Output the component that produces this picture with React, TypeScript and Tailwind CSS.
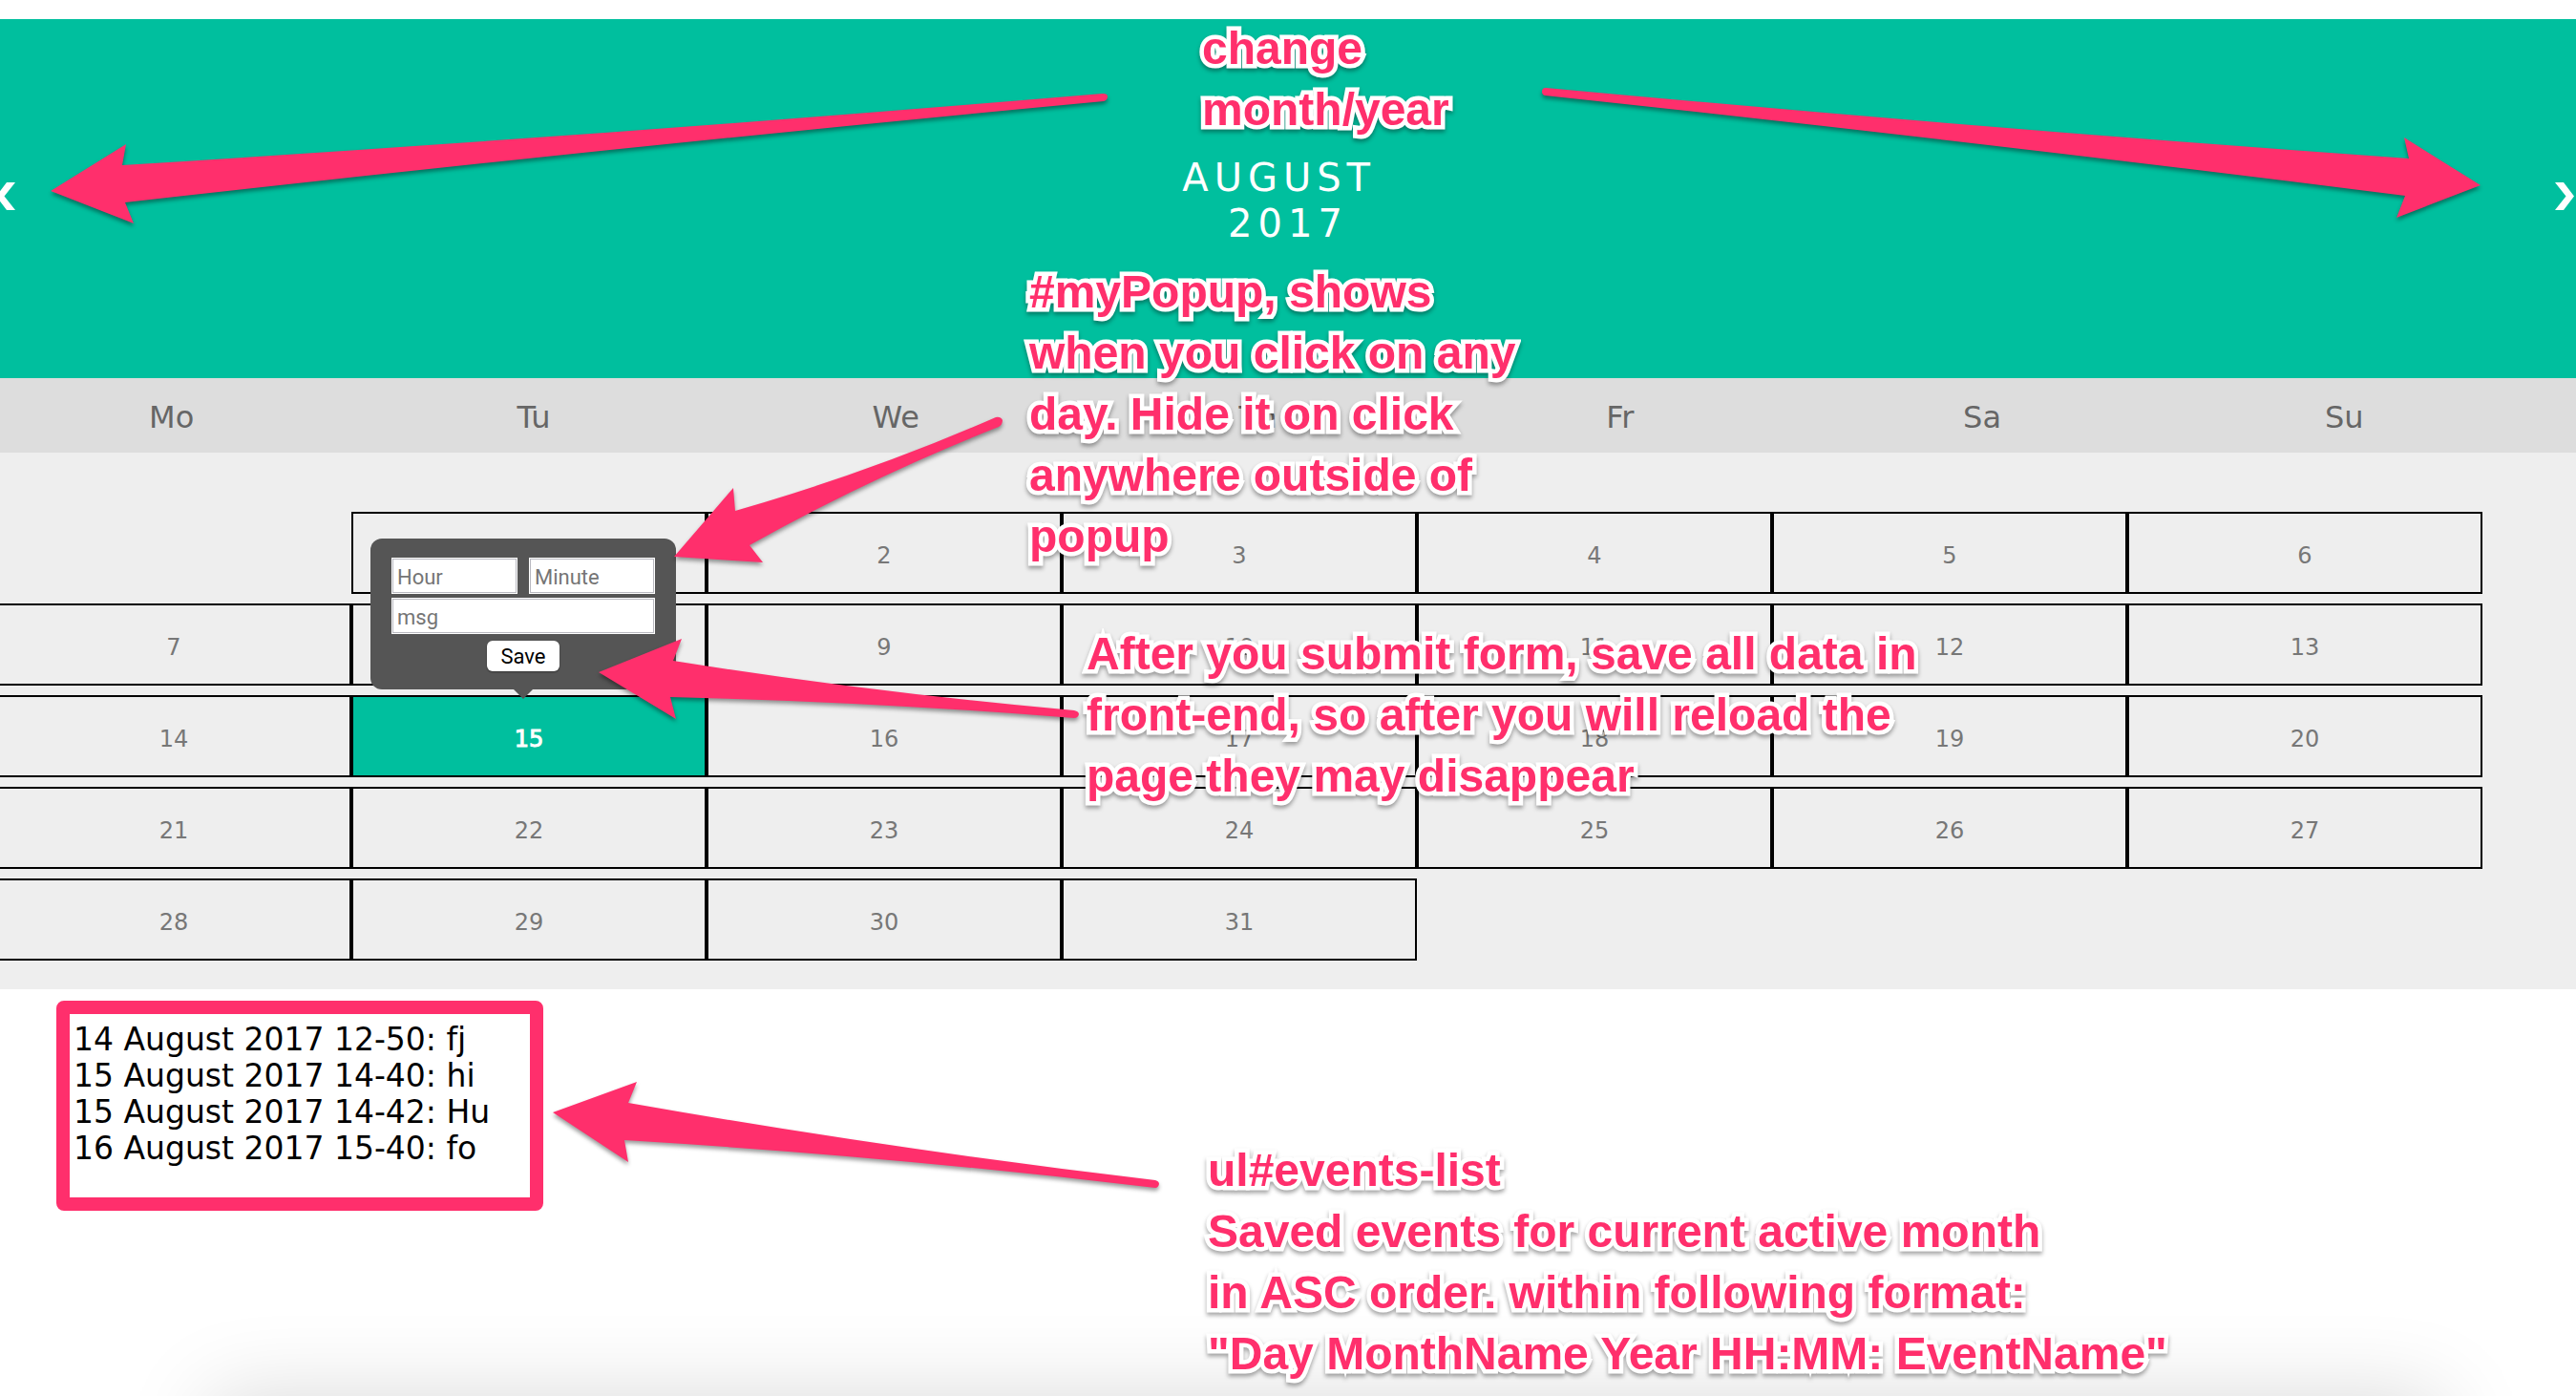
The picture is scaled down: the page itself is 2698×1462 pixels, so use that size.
import { useState, type FormEvent } from "react";

const WEEKDAYS = ["Mo", "Tu", "We", "Th", "Fr", "Sa", "Su"];
const DAYS = Array.from({ length: 31 }, (_, i) => i + 1);

type CalendarEvent = { day: number; hour: string; minute: string; name: string };

const INITIAL_EVENTS: CalendarEvent[] = [
  { day: 14, hour: "12", minute: "50", name: "fj" },
  { day: 15, hour: "14", minute: "40", name: "hi" },
  { day: 15, hour: "14", minute: "42", name: "Hu" },
  { day: 16, hour: "15", minute: "40", name: "fo" },
];

function Header() {
  return (
    <header className="flex items-start justify-between bg-[#00bf9e] pt-[142px] pb-[138px] text-white">
      <button type="button" aria-label="Previous month" className="mt-[29px] -ml-1">
        <svg width="20" height="29" viewBox="0 0 20 29" fill="currentColor">
          <path d="M11 0H20L8.5 14.5L20 29H11L0 14.5Z" />
        </svg>
      </button>
      <h1 className="pl-1.5 text-center text-[40px] leading-[48px] tracking-[6px]">
        AUGUST&nbsp;
        <br />
        2017
      </h1>
      <button type="button" aria-label="Next month" className="mt-[29px] mr-0.5">
        <svg width="20" height="29" viewBox="0 0 20 29" fill="currentColor">
          <path d="M9 0H0L11.500 14.5L0 29H9L20 14.5Z" />
        </svg>
      </button>
    </header>
  );
}

const FIELD =
  "h-[38px] w-full min-w-0 border border-white bg-white px-[5px] pt-0.5 text-[22px] text-black shadow-[inset_0_0_0_1px_#b9b9c0] outline-none placeholder:text-[#757575]";

function EventPopup({ onSave }: { onSave: (hour: string, minute: string, name: string) => void }) {
  const submit = (e: FormEvent<HTMLFormElement>) => {
    e.preventDefault();
    const data = new FormData(e.currentTarget);
    onSave(String(data.get("hour")), String(data.get("minute")), String(data.get("msg")));
  };
  return (
    <form
      id="myPopup"
      onSubmit={submit}
      className="absolute bottom-full left-5 z-10 mb-1.5 flex w-80 flex-col items-center rounded-xl bg-[#555] px-[22px] pt-5 pb-[19px] font-[Roboto,sans-serif]"
    >
      <div className="grid w-full grid-cols-2 gap-x-3 gap-y-1">
        <input name="hour" aria-label="Hour" placeholder="Hour" className={FIELD} />
        <input name="minute" aria-label="Minute" placeholder="Minute" className={FIELD} />
        <div className="col-span-2">
          <input name="msg" aria-label="Message" placeholder="msg" className={FIELD} />
        </div>
      </div>
      <button
        type="submit"
        className="mt-[7px] h-8 w-[76px] rounded-md bg-white pt-0.5 text-[22px] leading-[30px] text-black shadow-[0_1px_2px_rgba(0,0,0,0.4)]"
      >
        Save
      </button>
      <span className="absolute top-full border-x-[10px] border-t-[10px] border-x-transparent border-t-[#555]" />
    </form>
  );
}

const NOTE =
  "pointer-events-none absolute z-30 whitespace-nowrap font-['Liberation_Sans',Arial,sans-serif] text-[48px] font-bold leading-[64px] text-[#ff2f6c] [-webkit-text-stroke:9px_white] [paint-order:stroke_fill] [stroke-linejoin:round] drop-shadow-[0_3px_2px_rgba(0,0,0,0.35)]";

function Note({ lines, place }: { lines: string[]; place: string }) {
  return (
    <div className={`${NOTE} ${place}`}>
      {lines.map((line) => (
        <div key={line}>{line}</div>
      ))}
    </div>
  );
}

const ARROWS = [
  "M53 200L132 151L128 173Q643 141 1155 98Q1160 98 1160 101Q1160 105 1156 106Q645 154 131 212L140 234Z",
  "M2598 194L2518 144L2523 166Q2070 134 1619 92Q1615 92 1615 96Q1615 99 1618 100Q2068 148 2519 205L2510 228Z",
  "M706 583L768 511L770 535Q910 495 1043 437Q1048 436 1050 440Q1050 445 1046 447Q912 500 785 571L799 589Z",
  "M627 704L714 669L705 692Q912 725 1125 744Q1130 745 1130 748Q1129 752 1125 752Q914 735 702 730L708 753Z",
  "M579 1165L667 1133L658 1155Q930 1203 1210 1236Q1214 1237 1214 1240Q1213 1244 1210 1244Q935 1211 654 1194L658 1217Z",
];

function Arrows() {
  return (
    <svg
      aria-hidden="true"
      width="2698"
      height="1462"
      viewBox="0 0 2698 1462"
      className="pointer-events-none absolute top-0 left-0 z-20 max-w-none fill-[#ff2f6c] drop-shadow-[0_3px_2px_rgba(0,0,0,0.4)]"
    >
      {ARROWS.map((d) => (
        <path key={d} d={d} />
      ))}
    </svg>
  );
}

export default function App() {
  const [selected, setSelected] = useState<number | null>(15);
  const [events, setEvents] = useState(INITIAL_EVENTS);

  const save = (day: number) => (hour: string, minute: string, name: string) => {
    setEvents((all) =>
      [...all, { day, hour, minute, name }].sort(
        (a, b) => a.day - b.day || Number(a.hour) - Number(b.hour) || Number(a.minute) - Number(b.minute),
      ),
    );
    setSelected(null);
  };

  return (
    <div className="relative min-h-screen overflow-hidden bg-white pt-5 font-['DejaVu_Sans',Verdana,sans-serif]">
      <Header />

      <div className="bg-[#ddd] pt-[22px] pb-[18px]">
        <ul className="mr-[53px] -ml-[10px] grid grid-cols-7 text-center text-[32px] leading-[38px] text-[#666]">
          {WEEKDAYS.map((name) => (
            <li key={name}>{name}</li>
          ))}
        </ul>
      </div>

      <div className="bg-[#eee] pt-[62px] pr-[98px] pb-[30px]">
        <ul className="-ml-1 grid grid-cols-7 gap-y-2.5">
          {DAYS.map((day) => (
            <li key={day} className={day === 1 ? "relative col-start-2" : "relative"}>
              <button
                type="button"
                onClick={() => setSelected(day)}
                className={`flex h-[86px] w-full items-center justify-center border-2 border-black pt-1.5 text-2xl ${
                  day === 15 ? "bg-[#00bf9e] text-white [-webkit-text-stroke:1px_white]" : "text-[#777]"
                }`}
              >
                {day}
              </button>
              {selected === day && <EventPopup onSave={save(day)} />}
            </li>
          ))}
        </ul>
      </div>

      <ul
        id="events-list"
        className="mt-3 ml-[59px] w-[510px] rounded-lg border-[14px] border-[#ff2f6c] pt-2 pb-8 pl-1 text-[33px] leading-[38px] text-black"
      >
        {events.map((e, i) => (
          <li key={i}>
            {e.day} August 2017 {e.hour}-{e.minute}: {e.name}
          </li>
        ))}
      </ul>

      <div className="absolute top-full right-[140px] left-[220px] h-40 shadow-[0_0_90px_rgba(0,0,0,0.15)]" />

      <Arrows />
      <Note place="top-[19px] left-[1259px]" lines={["change", "month/year"]} />
      <Note
        place="top-[274px] left-[1078px]"
        lines={["#myPopup, shows", "when you click on any", "day. Hide it on click", "anywhere outside of", "popup"]}
      />
      <Note
        place="top-[653px] left-[1138px]"
        lines={["After you submit form, save all data in", "front-end, so after you will reload the", "page they may disappear"]}
      />
      <Note
        place="top-[1194px] left-[1265px]"
        lines={[
          "ul#events-list",
          "Saved events for current active month",
          "in ASC order. within following format:",
          '"Day MonthName Year HH:MM: EventName"',
        ]}
      />
    </div>
  );
}
